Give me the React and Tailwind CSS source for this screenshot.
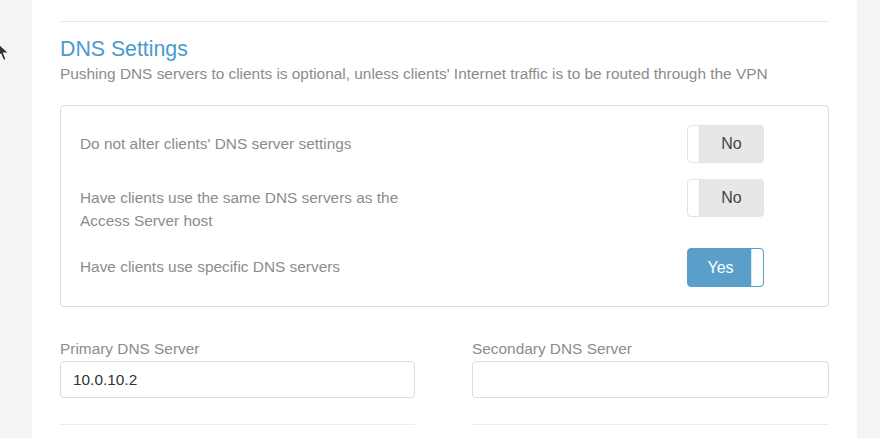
/**
 * DNS settings panel from the VPN admin page.
 */

const rows = [
  { label: "Do not alter clients' DNS server settings", on: false },
  { label: 'Have clients use the same DNS servers as the Access Server host', on: false },
  { label: 'Have clients use specific DNS servers', on: true },
]

function Toggle({ on }) {
  if (on) {
    return (
      <div className="flex h-[39px] w-[77px] shrink-0 overflow-hidden rounded-[4px] border border-[#5a9fc9] bg-[#599fca]">
        <span className="flex flex-1 items-center justify-center pl-[2px] text-[16px] text-white">Yes</span>
        <span className="w-[12px] rounded-r-[3px] border-l border-[#d8e8f2] bg-white" />
      </div>
    )
  }
  return (
    <div className="flex h-[38px] w-[77px] shrink-0 overflow-hidden rounded-[4px] border border-[#e4e4e4] bg-[#e7e7e7]">
      <span className="w-[12px] rounded-l-[3px] border-r border-[#e0e0e0] bg-white" />
      <span className="flex flex-1 items-center justify-center text-[16px] text-[#444]">No</span>
    </div>
  )
}

function Field({ label, value }) {
  return (
    <div className="flex flex-col">
      <label className="text-[15.4px] leading-[22px] text-[#8c8c8c]">{label}</label>
      <div className="mt-[1px] flex h-[37px] items-center rounded-[4px] border border-[#dcdcdc] bg-white px-[12px] text-[15.4px] text-[#333]">
        {value}
      </div>
      <div className="mt-[26px] border-t border-[#ececec]" />
    </div>
  )
}

export default function App() {
  return (
    <div
      className="relative flex h-[438px] w-[880px] overflow-hidden bg-[#f4f4f4]"
      style={{ fontFamily: '"Liberation Sans", Arial, sans-serif' }}
    >
      {/* cursor */}
      <svg className="absolute left-[-4px] top-[41px]" width="15" height="22" viewBox="0 0 14 20">
        <path d="M1 1 L1 15 L4.5 12 L7 18 L9.5 17 L7 11 L12 11 Z" fill="#333" stroke="#fff" strokeWidth="1" />
      </svg>

      <div className="ml-[32px] w-[825px] bg-white px-[28px] pt-[21px]">
        <div className="border-t border-[#e6e6e6]" />

        <h2 className="mt-[14px] text-[21.3px] leading-[26px] text-[#4b9bcb]">DNS Settings</h2>
        <p className="mt-[1px] text-[15.4px] leading-[22px] text-[#8c8c8c]">
          Pushing DNS servers to clients is optional, unless clients' Internet traffic is to be routed through the VPN
        </p>

        <div className="mt-[20px] flex flex-col gap-[16px] rounded-[4px] border border-[#dddddd] px-[19px] py-[19px]">
          {rows.map((row) => (
            <div key={row.label} className="flex items-start justify-between pr-[45px]">
              <span className="max-w-[340px] pt-[7px] text-[15.4px] leading-[23px] text-[#8c8c8c]">{row.label}</span>
              <Toggle on={row.on} />
            </div>
          ))}
        </div>

        <div className="mt-[31px] grid grid-cols-[355px_357px] gap-x-[57px]">
          <Field label="Primary DNS Server" value="10.0.10.2" />
          <Field label="Secondary DNS Server" value="" />
        </div>
      </div>
    </div>
  )
}
